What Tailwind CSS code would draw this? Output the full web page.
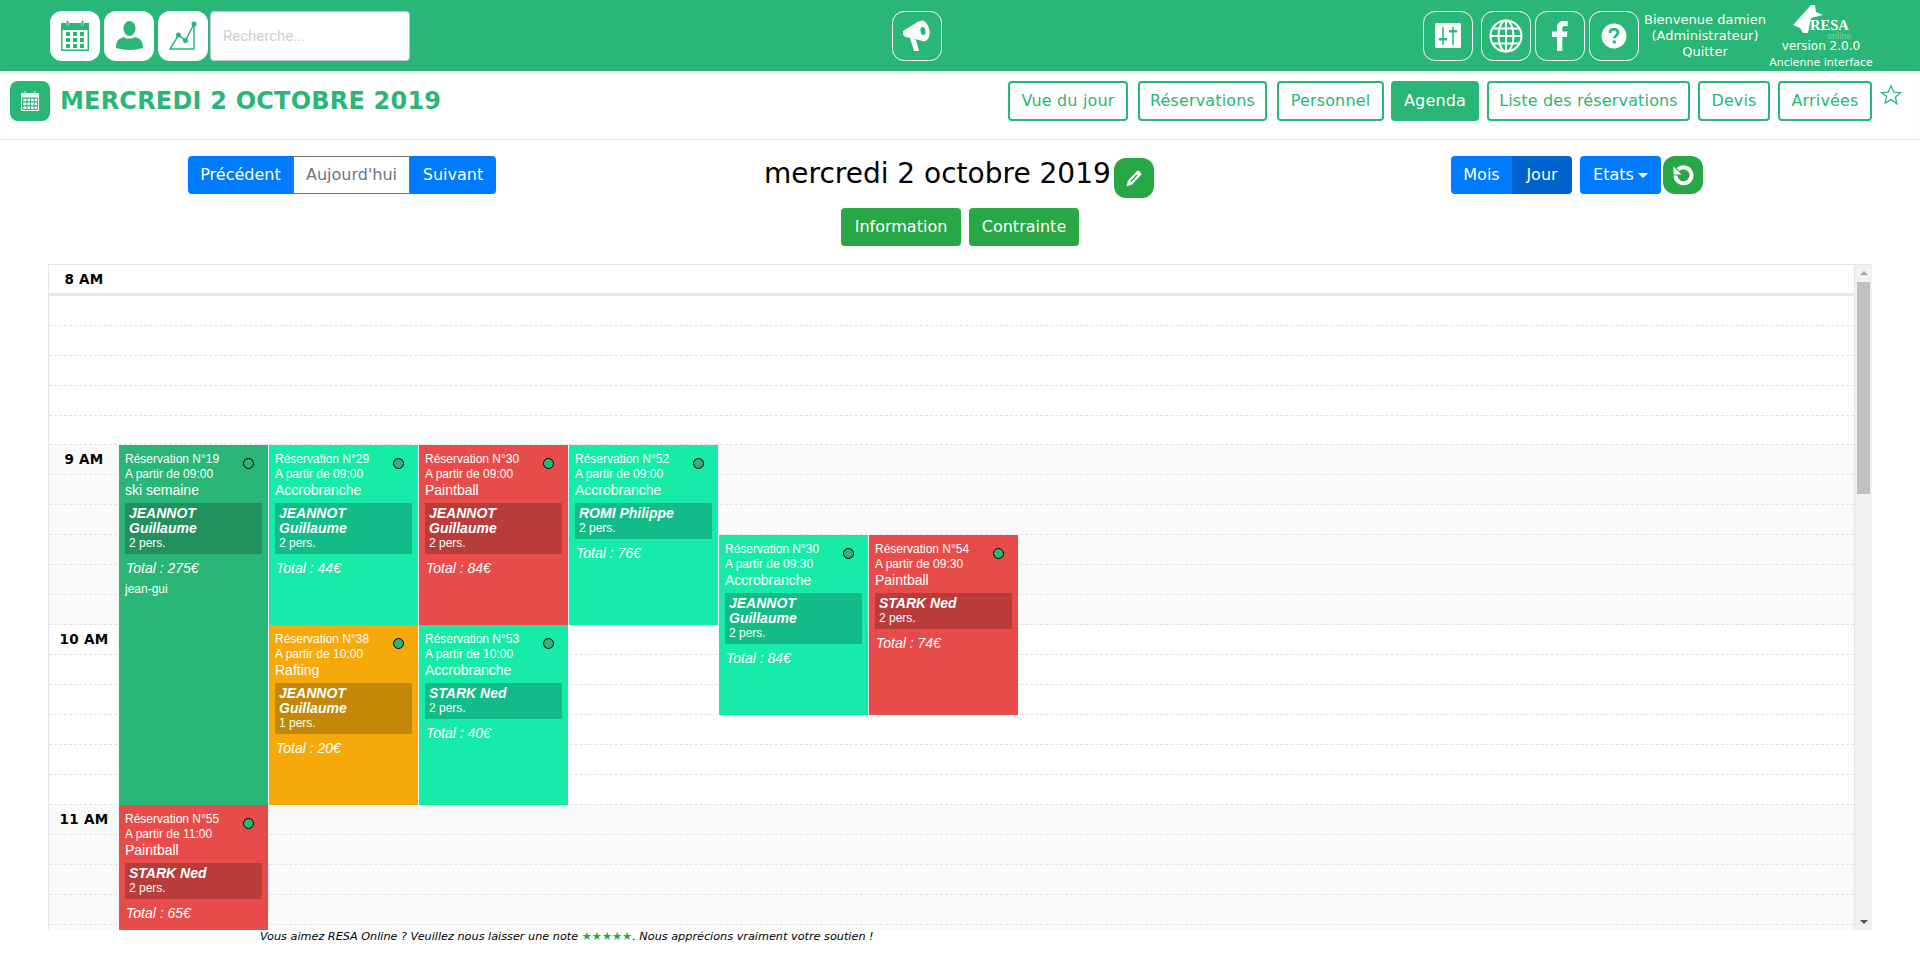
<!DOCTYPE html>
<html lang="fr">
<head>
    <meta charset="UTF-8" />
    <title>RESA Online - Agenda</title>
    <script src="https://cdn.jsdelivr.net/npm/@tailwindcss/browser@4"></script>
</head>
<body class="w-[1920px] h-[980px] overflow-hidden bg-white font-['DejaVu_Sans',sans-serif]">

<!-- Top bar -->
<header class="h-[71px] bg-[#2ab676] flex items-center justify-between pl-[50px] pr-[49px] text-white">
    <div class="flex items-center w-[360px]">
        <a class="w-[50px] h-[50px] bg-white rounded-xl flex items-center justify-center">
            <svg width="28" height="31" viewBox="0 0 28 31" fill="#2ab676"><path d="M0 3h5v2.500h3V3h12v2.500h3V3h5v28H0zM1.500 10v19.500h25V10z"/><rect x="5.500" y="0.500" width="2" height="6" rx="1"/><rect x="20.500" y="0.500" width="2" height="6" rx="1"/><path d="M5 12h4v4H5zM12 12h4v4h-4zM19 12h4v4h-4zM5 18h4v4H5zM12 18h4v4h-4zM19 18h4v4h-4zM5 24h4v4H5zM12 24h4v4h-4zM19 24h4v4h-4z"/></svg>
        </a>
        <a class="ml-1 w-[50px] h-[50px] bg-white rounded-xl flex items-center justify-center">
            <svg width="27" height="29" viewBox="0 0 27 29" fill="#2ab676"><ellipse cx="13.500" cy="7.500" rx="6" ry="7.500"/><path d="M0 27c0-7 3-10 8-11 2 2 9 2 11 0 5 1 8 4 8 11-8 2.500-19 2.500-27 0z"/></svg>
        </a>
        <a class="ml-1 w-[50px] h-[50px] bg-white rounded-xl flex items-center justify-center">
            <svg width="28" height="30" viewBox="0 0 28 30" fill="none" stroke="#2ab676"><path d="M25 3v25H1L9.500 14l7 5.500L25 3" stroke-width="1.500"/><g fill="#2ab676" stroke="none"><circle cx="25" cy="3" r="2.500"/><circle cx="9.500" cy="14" r="2.500"/><circle cx="16.500" cy="19.500" r="2.500"/></g></svg>
        </a>
        <input type="text" placeholder="Recherche..." class="ml-0.5 w-[200px] h-[50px] bg-white rounded border border-[#c4c8cc] px-3 text-[15px] placeholder:text-[#cfcfd4] font-['Roboto',sans-serif]" />
    </div>

    <a class="w-[50px] h-[50px] border border-white rounded-xl flex items-center justify-center">
        <svg width="30" height="32" viewBox="0 0 30 32" fill="white"><path d="M1 11 17 1l4 20-11-2.500L14 20l3 11h-5L8 18l-4-1q-2-.5-3-2.500z"/><ellipse cx="21" cy="11" rx="6.500" ry="10.500" transform="rotate(-10 21 11)"/><ellipse cx="21" cy="11" rx="2.500" ry="4" fill="#2ab676" transform="rotate(-10 21 11)"/></svg>
    </a>

    <div class="flex items-center">
        <a class="w-[50px] h-[50px] border border-white rounded-xl flex items-center justify-center">
            <svg width="26" height="26" viewBox="0 0 26 26"><rect width="26" height="25" rx="1.500" fill="white"/><g stroke="#2ab676" stroke-width="1.500"><path d="M8 4v18M18 4v18"/></g><rect x="4" y="15" width="8" height="2.500" fill="#2ab676"/><rect x="14" y="7" width="8" height="2.500" fill="#2ab676"/></svg>
        </a>
        <a class="ml-2 w-[50px] h-[50px] border border-white rounded-xl flex items-center justify-center">
            <svg width="34" height="34" viewBox="0 0 34 34" fill="none" stroke="white" stroke-width="2"><circle cx="17" cy="17" r="15.500"/><ellipse cx="17" cy="17" rx="7.500" ry="15.500"/><path d="M17 1.500v31M1.500 17h31M3.500 9.500h27M3.500 24.500h27"/></svg>
        </a>
        <a class="ml-1 w-[50px] h-[50px] border border-white rounded-xl flex items-center justify-center">
            <svg width="16" height="30" viewBox="0 0 16 30" fill="white"><path d="M5 30V16H0v-5.500h5V7c0-4.500 2.700-7 6.700-7 1.900 0 3.500.1 4 .2v4.900h-2.800c-2.200 0-2.600 1-2.600 2.600v2.800h5.200l-.7 5.500h-4.500v14z"/></svg>
        </a>
        <a class="ml-1 w-[50px] h-[50px] border border-white rounded-xl flex items-center justify-center">
            <svg width="26" height="26" viewBox="0 0 26 26"><circle cx="13" cy="13" r="12.500" fill="white"/><path d="M9 10c0-2.500 1.800-3.800 4-3.800s4 1.300 4 3.400c0 3-3.500 2.800-3.500 5.600" fill="none" stroke="#2ab676" stroke-width="2.800"/><rect x="11.800" y="17.500" width="3" height="3" fill="#2ab676"/></svg>
        </a>
        <div class="w-[132px] text-center text-[13px] leading-4 whitespace-nowrap">
            <p>Bienvenue damien</p>
            <p>(Administrateur)</p>
            <p>Quitter</p>
        </div>
        <div class="w-[100px] h-[71px] flex flex-col items-center">
            <div class="relative w-[60px] h-[37px] mt-[4px] shrink-0">
                <svg class="absolute left-[2px] top-[1px]" width="30" height="28" viewBox="0 0 30 28" fill="white"><path d="M0 20 18 0h4l1 7 7 3-12 3-3 15h-5l-3-5z"/></svg>
                <span class="absolute left-[19px] top-[13px] text-[14.5px] leading-[16px] font-bold font-['Liberation_Serif',serif]">RESA</span>
                <span class="absolute left-[36px] top-[28px] text-[8px] leading-[9px] text-white/40">online</span>
            </div>
            <p class="text-[12px] leading-[16px] mt-[-3px] shrink-0">version 2.0.0</p>
            <p class="text-[11px] leading-[18px] whitespace-nowrap shrink-0">Ancienne interface</p>
        </div>
    </div>
</header>

<!-- Page title and tabs -->
<div class="h-[69px] pb-2 border-b border-[#e5e5e5] flex items-center justify-between pl-[10px] pr-[18px] shadow-[inset_0_2px_3px_rgba(0,0,0,0.03)]">
    <div class="flex items-center">
        <div class="w-10 h-10 rounded-lg bg-[#2ab676] flex items-center justify-center">
            <svg width="18" height="20" viewBox="0 0 28 31" fill="white"><path d="M0 3h5v2.500h3V3h12v2.500h3V3h5v28H0zM1.500 10v19.500h25V10z"/><rect x="5.500" y="0.500" width="2" height="6" rx="1"/><rect x="20.500" y="0.500" width="2" height="6" rx="1"/><path d="M3.500 12h5v4h-5zM10 12h4v4h-4zM15.500 12h4v4h-4zM21 12h4v4h-4zM3.500 18h5v4h-5zM10 18h4v4h-4zM15.500 18h4v4h-4zM21 18h4v4h-4zM3.500 24h5v4h-5zM10 24h4v4h-4zM15.500 24h4v4h-4zM21 24h4v4h-4z"/></svg>
        </div>
        <h1 class="ml-[10px] -mt-[1px] text-[24px] font-bold tracking-[0.2px] text-[#2ab676] whitespace-nowrap">MERCREDI 2 OCTOBRE 2019</h1>
    </div>
    <div class="flex items-center">
        <nav class="flex items-center text-[16px] tracking-[0.15px] text-[#2ab676]">
            <a class="w-[120px] h-10 border-2 border-[#2ab676] rounded flex items-center justify-center">Vue du jour</a>
            <a class="ml-[10px] w-[129px] h-10 border-2 border-[#2ab676] rounded flex items-center justify-center">Réservations</a>
            <a class="ml-[10px] w-[107px] h-10 border-2 border-[#2ab676] rounded flex items-center justify-center">Personnel</a>
            <a class="ml-[7px] w-[88px] h-10 bg-[#2ab676] text-white rounded flex items-center justify-center">Agenda</a>
            <a class="ml-2 w-[203px] h-10 border-2 border-[#2ab676] rounded flex items-center justify-center">Liste des réservations</a>
            <a class="ml-2 w-[72px] h-10 border-2 border-[#2ab676] rounded flex items-center justify-center">Devis</a>
            <a class="ml-2 w-[94px] h-10 border-2 border-[#2ab676] rounded flex items-center justify-center">Arrivées</a>
        </nav>
        <svg class="ml-2 -mt-[12px]" width="22" height="22" viewBox="0 0 24 24" fill="none" stroke="#2ab676" stroke-width="1.400"><path d="m12 2 3 6.800 7.300.7-5.500 4.900 1.600 7.300L12 17l-6.400 3.700 1.600-7.300L1.700 9.500 9 8.800z"/></svg>
    </div>
</div>

<!-- Calendar toolbar -->
<div class="h-[124px] flex items-start pl-[188px] pt-4">
    <div class="flex h-[38px] w-[308px] text-[16px] text-white">
        <a class="w-[105px] bg-[#007bff] rounded-l flex items-center justify-center">Précédent</a>
        <a class="w-[117px] border border-[#6c757d] text-[#6c757d] flex items-center justify-center">Aujourd'hui</a>
        <a class="w-[86px] bg-[#007bff] rounded-r flex items-center justify-center">Suivant</a>
    </div>
    <div class="ml-[268px] w-[390px] flex flex-col items-center">
        <div class="flex items-start w-full mt-[2px] h-10">
            <h2 class="text-[28px] leading-[32px] text-black whitespace-nowrap w-[350px]">mercredi 2 octobre 2019</h2>
            <a class="w-10 h-10 bg-[#28a745] rounded-xl flex items-center justify-center">
                <svg width="16" height="17" viewBox="0 0 16 17" fill="white"><path d="M0.500 16.500 2 10.500 11 1q1-1 2 0l2 2q1 1 0 2l-9 9.500z"/><path d="m5 11.500 6-6.500" stroke="#28a745" stroke-width="1.300"/></svg>
            </a>
        </div>
        <div class="flex mt-[10px] ml-[2px] text-[16px] text-white">
            <a class="w-[120px] h-[38px] bg-[#28a745] rounded flex items-center justify-center">Information</a>
            <a class="ml-2 w-[110px] h-[38px] bg-[#28a745] rounded flex items-center justify-center">Contrainte</a>
        </div>
    </div>
    <div class="ml-[297px] flex text-[16px] text-white">
        <a class="w-[61px] h-[38px] bg-[#007bff] rounded-l flex items-center justify-center">Mois</a>
        <a class="w-[60px] h-[38px] bg-[#0062cc] rounded-r flex items-center justify-center">Jour</a>
        <a class="ml-2 w-[81px] h-[38px] bg-[#007bff] rounded flex items-center justify-center">Etats<span class="ml-1 border-x-[5px] border-x-transparent border-t-[5px] border-t-white"></span></a>
        <a class="ml-[2px] w-10 h-[38px] bg-[#28a745] rounded-xl flex items-center justify-center">
            <svg width="22" height="22" viewBox="0 0 22 22" fill="none" stroke="white" stroke-width="4"><path d="M6 5.500a8 8 0 1 1-2.500 6"/><path d="M1.500 2.500v8h8z" fill="white" stroke="none"/></svg>
        </a>
    </div>
</div>

<!-- Day view -->
<div class="ml-[48px] w-[1824px] h-[666px] flex border-t border-l border-[#e5e5e5]">
    <div class="relative flex-1 overflow-hidden border-r border-[#e5e5e5]">
        <!-- 8 AM -->
        <div class="relative h-[180px] bg-white">
            <span class="absolute left-0 top-[4px] w-[70px] text-center text-[13.5px] leading-[20px] font-bold tracking-[0.3px] text-black">8 AM</span>
            <div class="h-[31px] border-b-[3px] border-[#e8e8e8]"></div>
            <div class="h-[30px] border-b border-dashed border-[#e2e2e2]"></div>
            <div class="h-[30px] border-b border-dashed border-[#e2e2e2]"></div>
            <div class="h-[30px] border-b border-dashed border-[#e2e2e2]"></div>
            <div class="h-[30px] border-b border-dashed border-[#e2e2e2]"></div>
            <div class="h-[29px] border-b border-dashed border-[#e2e2e2]"></div>
        </div>
        <!-- 9 AM -->
        <div class="relative h-[180px] bg-[#fafafa]">
            <span class="absolute left-0 top-[4px] w-[70px] text-center text-[13.5px] leading-[20px] font-bold tracking-[0.3px] text-black">9 AM</span>
            <div class="h-[30px] border-b border-dashed border-[#e2e2e2]"></div>
            <div class="h-[30px] border-b border-dashed border-[#e2e2e2]"></div>
            <div class="h-[30px] border-b border-dashed border-[#e2e2e2]"></div>
            <div class="h-[30px] border-b border-dashed border-[#e2e2e2]"></div>
            <div class="h-[30px] border-b border-dashed border-[#e2e2e2]"></div>
            <div class="h-[30px] border-b border-dashed border-[#e2e2e2]"></div>
        </div>
        <!-- 10 AM -->
        <div class="relative h-[180px] bg-white">
            <span class="absolute left-0 top-[4px] w-[70px] text-center text-[13.5px] leading-[20px] font-bold tracking-[0.3px] text-black">10 AM</span>
            <div class="h-[30px] border-b border-dashed border-[#e2e2e2]"></div>
            <div class="h-[30px] border-b border-dashed border-[#e2e2e2]"></div>
            <div class="h-[30px] border-b border-dashed border-[#e2e2e2]"></div>
            <div class="h-[30px] border-b border-dashed border-[#e2e2e2]"></div>
            <div class="h-[30px] border-b border-dashed border-[#e2e2e2]"></div>
            <div class="h-[30px] border-b border-dashed border-[#e2e2e2]"></div>
        </div>
        <!-- 11 AM -->
        <div class="relative h-[180px] bg-[#fafafa]">
            <span class="absolute left-0 top-[4px] w-[70px] text-center text-[13.5px] leading-[20px] font-bold tracking-[0.3px] text-black">11 AM</span>
            <div class="h-[30px] border-b border-dashed border-[#e2e2e2]"></div>
            <div class="h-[30px] border-b border-dashed border-[#e2e2e2]"></div>
            <div class="h-[30px] border-b border-dashed border-[#e2e2e2]"></div>
            <div class="h-[30px] border-b border-dashed border-[#e2e2e2]"></div>
            <div class="h-[30px] border-b border-dashed border-[#e2e2e2]"></div>
        </div>

        <!-- Events -->
        <div class="absolute left-[70px] top-[180px] w-[149px] h-[360px] bg-[#2ab676] px-[6px] pt-[7px] text-white font-['Liberation_Sans',sans-serif]">
            <span class="absolute right-[14px] top-[13px] w-[11px] h-[11px] rounded-full border border-black bg-[#2ab676]"></span>
            <p class="text-[12px] leading-[15px]">Réservation N°19</p>
            <p class="text-[12px] leading-[15px]">A partir de 09:00</p>
            <p class="text-[14px] leading-[16px]">ski semaine</p>
            <div class="mt-[5px] bg-black/20 px-[4px] py-[3px]">
                <p class="text-[14px] leading-[15px] font-bold italic">JEANNOT Guillaume</p>
                <p class="text-[12px] leading-[15px]">2 pers.</p>
            </div>
            <p class="mt-[6px] pl-[1px] text-[14px] leading-[16px] italic">Total : 275€</p>
            <p class="mt-[5px] text-[12px] leading-[16px]">jean-gui</p>
        </div>

        <div class="absolute left-[220px] top-[180px] w-[149px] h-[180px] bg-[#17eba8] px-[6px] pt-[7px] text-white font-['Liberation_Sans',sans-serif]">
            <span class="absolute right-[14px] top-[13px] w-[11px] h-[11px] rounded-full border border-black bg-[#2ab676]"></span>
            <p class="text-[12px] leading-[15px]">Réservation N°29</p>
            <p class="text-[12px] leading-[15px]">A partir de 09:00</p>
            <p class="text-[14px] leading-[16px]">Accrobranche</p>
            <div class="mt-[5px] bg-black/20 px-[4px] py-[3px]">
                <p class="text-[14px] leading-[15px] font-bold italic">JEANNOT Guillaume</p>
                <p class="text-[12px] leading-[15px]">2 pers.</p>
            </div>
            <p class="mt-[6px] pl-[1px] text-[14px] leading-[16px] italic">Total : 44€</p>
        </div>

        <div class="absolute left-[370px] top-[180px] w-[149px] h-[180px] bg-[#e84c4a] px-[6px] pt-[7px] text-white font-['Liberation_Sans',sans-serif]">
            <span class="absolute right-[14px] top-[13px] w-[11px] h-[11px] rounded-full border border-black bg-[#2ab676]"></span>
            <p class="text-[12px] leading-[15px]">Réservation N°30</p>
            <p class="text-[12px] leading-[15px]">A partir de 09:00</p>
            <p class="text-[14px] leading-[16px]">Paintball</p>
            <div class="mt-[5px] bg-black/20 px-[4px] py-[3px]">
                <p class="text-[14px] leading-[15px] font-bold italic">JEANNOT Guillaume</p>
                <p class="text-[12px] leading-[15px]">2 pers.</p>
            </div>
            <p class="mt-[6px] pl-[1px] text-[14px] leading-[16px] italic">Total : 84€</p>
        </div>

        <div class="absolute left-[520px] top-[180px] w-[149px] h-[180px] bg-[#17eba8] px-[6px] pt-[7px] text-white font-['Liberation_Sans',sans-serif]">
            <span class="absolute right-[14px] top-[13px] w-[11px] h-[11px] rounded-full border border-black bg-[#2ab676]"></span>
            <p class="text-[12px] leading-[15px]">Réservation N°52</p>
            <p class="text-[12px] leading-[15px]">A partir de 09:00</p>
            <p class="text-[14px] leading-[16px]">Accrobranche</p>
            <div class="mt-[5px] bg-black/20 px-[4px] py-[3px]">
                <p class="text-[14px] leading-[15px] font-bold italic">ROMI Philippe</p>
                <p class="text-[12px] leading-[15px]">2 pers.</p>
            </div>
            <p class="mt-[6px] pl-[1px] text-[14px] leading-[16px] italic">Total : 76€</p>
        </div>

        <div class="absolute left-[670px] top-[270px] w-[149px] h-[180px] bg-[#17eba8] px-[6px] pt-[7px] text-white font-['Liberation_Sans',sans-serif]">
            <span class="absolute right-[14px] top-[13px] w-[11px] h-[11px] rounded-full border border-black bg-[#2ab676]"></span>
            <p class="text-[12px] leading-[15px]">Réservation N°30</p>
            <p class="text-[12px] leading-[15px]">A partir de 09:30</p>
            <p class="text-[14px] leading-[16px]">Accrobranche</p>
            <div class="mt-[5px] bg-black/20 px-[4px] py-[3px]">
                <p class="text-[14px] leading-[15px] font-bold italic">JEANNOT Guillaume</p>
                <p class="text-[12px] leading-[15px]">2 pers.</p>
            </div>
            <p class="mt-[6px] pl-[1px] text-[14px] leading-[16px] italic">Total : 84€</p>
        </div>

        <div class="absolute left-[820px] top-[270px] w-[149px] h-[180px] bg-[#e84c4a] px-[6px] pt-[7px] text-white font-['Liberation_Sans',sans-serif]">
            <span class="absolute right-[14px] top-[13px] w-[11px] h-[11px] rounded-full border border-black bg-[#2ab676]"></span>
            <p class="text-[12px] leading-[15px]">Réservation N°54</p>
            <p class="text-[12px] leading-[15px]">A partir de 09:30</p>
            <p class="text-[14px] leading-[16px]">Paintball</p>
            <div class="mt-[5px] bg-black/20 px-[4px] py-[3px]">
                <p class="text-[14px] leading-[15px] font-bold italic">STARK Ned</p>
                <p class="text-[12px] leading-[15px]">2 pers.</p>
            </div>
            <p class="mt-[6px] pl-[1px] text-[14px] leading-[16px] italic">Total : 74€</p>
        </div>

        <div class="absolute left-[220px] top-[360px] w-[149px] h-[180px] bg-[#f6a90a] px-[6px] pt-[7px] text-white font-['Liberation_Sans',sans-serif]">
            <span class="absolute right-[14px] top-[13px] w-[11px] h-[11px] rounded-full border border-black bg-[#2ab676]"></span>
            <p class="text-[12px] leading-[15px]">Réservation N°38</p>
            <p class="text-[12px] leading-[15px]">A partir de 10:00</p>
            <p class="text-[14px] leading-[16px]">Rafting</p>
            <div class="mt-[5px] bg-black/20 px-[4px] py-[3px]">
                <p class="text-[14px] leading-[15px] font-bold italic">JEANNOT Guillaume</p>
                <p class="text-[12px] leading-[15px]">1 pers.</p>
            </div>
            <p class="mt-[6px] pl-[1px] text-[14px] leading-[16px] italic">Total : 20€</p>
        </div>

        <div class="absolute left-[370px] top-[360px] w-[149px] h-[180px] bg-[#17eba8] px-[6px] pt-[7px] text-white font-['Liberation_Sans',sans-serif]">
            <span class="absolute right-[14px] top-[13px] w-[11px] h-[11px] rounded-full border border-black bg-[#2ab676]"></span>
            <p class="text-[12px] leading-[15px]">Réservation N°53</p>
            <p class="text-[12px] leading-[15px]">A partir de 10:00</p>
            <p class="text-[14px] leading-[16px]">Accrobranche</p>
            <div class="mt-[5px] bg-black/20 px-[4px] py-[3px]">
                <p class="text-[14px] leading-[15px] font-bold italic">STARK Ned</p>
                <p class="text-[12px] leading-[15px]">2 pers.</p>
            </div>
            <p class="mt-[6px] pl-[1px] text-[14px] leading-[16px] italic">Total : 40€</p>
        </div>

        <div class="absolute left-[70px] top-[540px] w-[149px] h-[180px] bg-[#e84c4a] px-[6px] pt-[7px] text-white font-['Liberation_Sans',sans-serif]">
            <span class="absolute right-[14px] top-[13px] w-[11px] h-[11px] rounded-full border border-black bg-[#2ab676]"></span>
            <p class="text-[12px] leading-[15px]">Réservation N°55</p>
            <p class="text-[12px] leading-[15px]">A partir de 11:00</p>
            <p class="text-[14px] leading-[16px]">Paintball</p>
            <div class="mt-[5px] bg-black/20 px-[4px] py-[3px]">
                <p class="text-[14px] leading-[15px] font-bold italic">STARK Ned</p>
                <p class="text-[12px] leading-[15px]">2 pers.</p>
            </div>
            <p class="mt-[6px] pl-[1px] text-[14px] leading-[16px] italic">Total : 65€</p>
        </div>
    </div>

    <!-- Scrollbar -->
    <div class="w-[17px] bg-[#f1f1f1] flex flex-col items-center">
        <span class="mt-[6px] border-x-[4px] border-x-transparent border-b-[4px] border-b-[#a3a3a3]"></span>
        <div class="mt-[7px] w-[13px] h-[212px] bg-[#c1c1c1]"></div>
        <span class="mt-auto mb-[6px] border-x-[4px] border-x-transparent border-t-[4px] border-t-[#505050]"></span>
    </div>
</div>

<p class="pl-[260px] text-[11.25px] leading-[14px] italic text-black">Vous aimez RESA Online ? Veuillez nous laisser une note <span class="text-[#28a745] not-italic">★★★★★</span>. Nous apprécions vraiment votre soutien !</p>

</body>
</html>
